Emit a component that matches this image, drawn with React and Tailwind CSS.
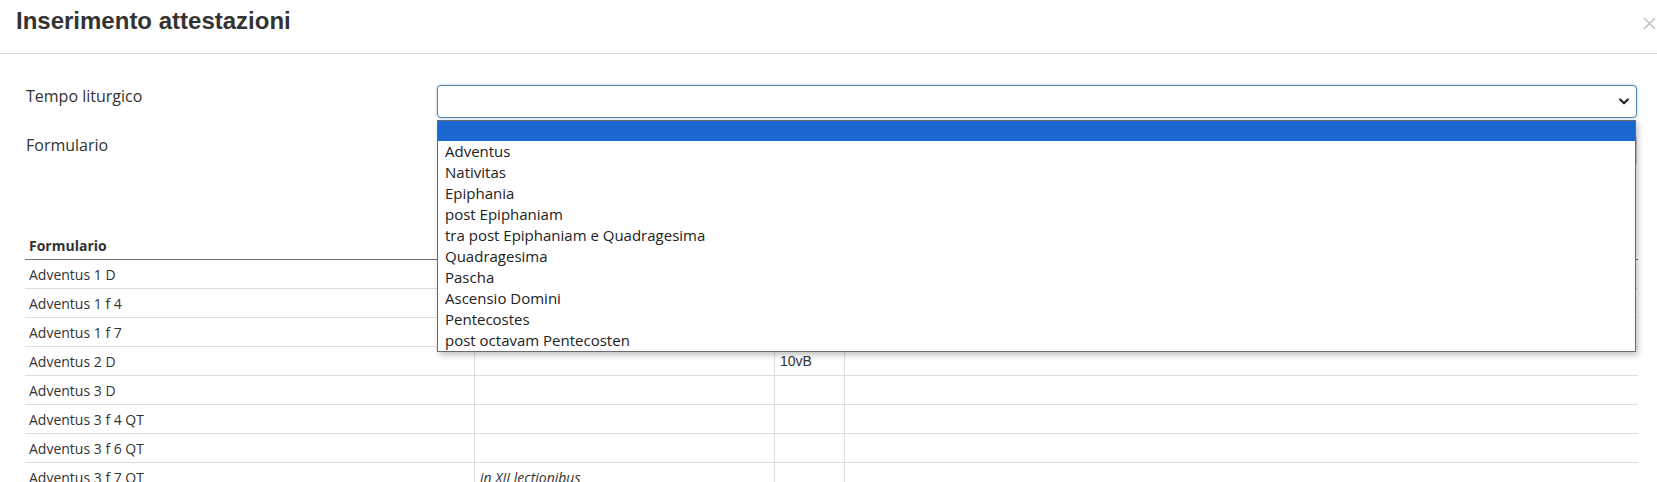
import React from "react";

const options = [
  "Adventus",
  "Nativitas",
  "Epiphania",
  "post Epiphaniam",
  "tra post Epiphaniam e Quadragesima",
  "Quadragesima",
  "Pascha",
  "Ascensio Domini",
  "Pentecostes",
  "post octavam Pentecosten",
];

const rows = [
  ["Adventus 1 D", "", ""],
  ["Adventus 1 f 4", "", ""],
  ["Adventus 1 f 7", "", ""],
  ["Adventus 2 D", "", "10vB"],
  ["Adventus 3 D", "", ""],
  ["Adventus 3 f 4 QT", "", ""],
  ["Adventus 3 f 6 QT", "", ""],
  ["Adventus 3 f 7 QT", "in XII lectionibus", ""],
  ["Adventus 4 D", "", ""],
];

function Chevron() {
  return (
    <svg width="10" height="7" viewBox="0 0 10 7" className="block">
      <polyline points="1.2,1.5 5,5.2 8.8,1.5" fill="none" stroke="#222" strokeWidth="2.2" strokeLinecap="round" strokeLinejoin="round" />
    </svg>
  );
}

function CloseX() {
  return (
    <svg width="13" height="13" viewBox="0 0 13 13" className="block">
      <path d="M1 1 L12 12 M12 1 L1 12" stroke="#c4c4c4" strokeWidth="1.6" />
    </svg>
  );
}

export default function App() {
  return (
    <div className="w-[1657px] h-[482px] overflow-hidden bg-white text-[#333] font-['Open_Sans',sans-serif]">
      {/* Header */}
      <div className="h-[54px] border-b border-[#d4d4d4] flex items-start justify-between pl-4">
        <h4 className="pt-[8px] text-[24px] leading-[26px] font-bold text-[#333] font-['Liberation_Sans',Arial,sans-serif]">
          Inserimento attestazioni
        </h4>
        <span className="pt-[17px] pr-[1px]">
          <CloseX />
        </span>
      </div>

      {/* Form */}
      <div className="pl-[25px] pr-[20px] pt-[31px] flex flex-col gap-[16px]">
        <div className="flex items-start">
          <label className="w-[412px] pt-[2px] text-[16px] leading-[19px] text-[#333] pl-[1px]">Tempo liturgico</label>
          <div className="relative w-[1200px]">
            <div className="h-[33px] rounded-[4px] border border-[#4f86b0] shadow-[0_0_3px_rgba(79,134,176,0.45)] bg-white flex items-center justify-end pr-[7px]">
              <Chevron />
            </div>
            <div className="absolute left-0 top-[35px] w-[1199px] z-10 bg-white border border-[#6b6b6b] shadow-[2px_3px_6px_rgba(0,0,0,0.25)] text-[15px] text-[#222]">
              <div className="h-[20px] bg-[#1b67d2]" />
              {options.map((o) => (
                <div key={o} className="h-[21px] leading-[20px] pl-[7px] whitespace-nowrap">
                  {o}
                </div>
              ))}
            </div>
          </div>
        </div>
        <div className="flex items-start">
          <label className="w-[412px] pt-[2px] text-[16px] leading-[19px] text-[#333] pl-[1px]">Formulario</label>
          <div className="w-[1200px]">
            <div className="h-[33px] rounded-[4px] border border-[#ccc] bg-white" />
          </div>
        </div>
      </div>

      {/* Table */}
      <div className="ml-[25px] mr-[19px] mt-[64px] text-[14px] text-[#333]">
        <div className="grid grid-cols-[449px_300px_70px_1fr] h-[29px] border-b border-[#777] font-bold">
          <div className="px-[4px] flex items-center">Formulario</div>
          <div className="px-[5px] flex items-center border-l border-[#ddd]"></div>
          <div className="px-[5px] flex items-center border-l border-[#ddd]"></div>
          <div className="px-[5px] flex items-center border-l border-[#ddd]"></div>
        </div>
        {rows.map((r, i) => (
          <div key={i} className="grid grid-cols-[449px_300px_70px_1fr] h-[29px] border-b border-[#ddd]">
            <div className="px-[4px] flex items-center whitespace-nowrap">{r[0]}</div>
            <div className="px-[5px] flex items-center border-l border-[#ddd] italic whitespace-nowrap">{r[1]}</div>
            <div className="px-[5px] flex items-center border-l border-[#ddd] font-['Liberation_Sans',Arial,sans-serif]">{r[2]}</div>
            <div className="px-[5px] flex items-center border-l border-[#ddd]"></div>
          </div>
        ))}
      </div>
    </div>
  );
}
